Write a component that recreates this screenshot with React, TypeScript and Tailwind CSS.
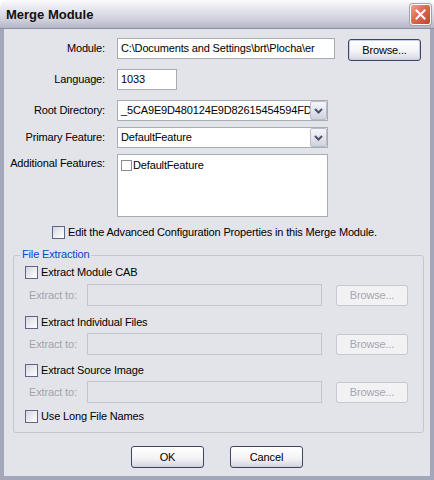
import React from "react";

const FONT = "font-['Liberation_Sans',Arial,sans-serif]";

function Checkbox() {
  return (
    <span className="inline-block w-[13px] h-[13px] shrink-0 border border-[#5d6685] bg-[linear-gradient(135deg,#d4d5de_0%,#eeeef2_55%,#ffffff_100%)]" />
  );
}

function ComboArrow() {
  return (
    <span className="flex items-center justify-center w-[17px] h-[19px] shrink-0 rounded-[2px] border border-[#b9bccb] bg-[linear-gradient(to_bottom,#f6f6f9_0%,#e4e5ec_50%,#cfd1dc_100%)]">
      <svg width="9" height="6" viewBox="0 0 9 6">
        <path d="M1 1 L4.5 4.5 L8 1" fill="none" stroke="#4a5270" strokeWidth="2" />
      </svg>
    </span>
  );
}

function Button({ children, w, disabled, focus }: { children: React.ReactNode; w: string; disabled?: boolean; focus?: boolean }) {
  if (disabled) {
    return (
      <div className={`${w} h-[21px] flex items-center justify-center rounded-[3px] border border-[#c7c8d2] bg-[#f2f2f4] text-[#a6a6ae]`}>
        {children}
      </div>
    );
  }
  return (
    <div
      className={`${w} h-[22px] flex items-center justify-center rounded-[3px] border border-[#3f4561] bg-[linear-gradient(to_bottom,#ffffff_0%,#f4f4f7_55%,#dcdde5_90%,#c9cad6_100%)] text-black ${
        focus ? "shadow-[inset_0_0_0_1px_#c6d0e6]" : ""
      }`}
    >
      {children}
    </div>
  );
}

function ExtractRow() {
  return (
    <div className="flex items-center h-[22px] pl-[4px]">
      <span className="w-[58px] text-[#a3a3aa]">Extract to:</span>
      <div className="w-[235px] h-[22px] border border-[#c3c5cf]" />
      <div className="ml-[14px]">
        <Button w="w-[72px]" disabled>
          Browse...
        </Button>
      </div>
    </div>
  );
}

export default function App() {
  return (
    <div className={`w-[434px] h-[480px] bg-white flex flex-col ${FONT} text-[11px] leading-[13px] text-black tracking-[-0.15px]`}>
      {/* Title bar */}
      <div className="h-[29px] shrink-0 rounded-t-[7px] border-b border-[#8d8fa6] bg-[linear-gradient(to_bottom,#fbfbfd_0%,#f0f0f5_15%,#dfdfe8_45%,#cccdda_75%,#b3b5c7_100%)] flex items-center justify-between pl-[6px] pr-[3px]">
        <span className="text-[13px] font-bold tracking-[0px] text-[#111] mt-[1px]">Merge Module</span>
        <div className="w-[21px] h-[21px] rounded-[3px] border border-white bg-[linear-gradient(135deg,#f0a08c_0%,#dc6a52_45%,#c2432c_100%)] flex items-center justify-center shadow-[0_0_0_1px_#b59a9a]">
          <svg width="11" height="11" viewBox="0 0 11 11">
            <path d="M1.5 1.5 L9.5 9.5 M9.5 1.5 L1.5 9.5" stroke="white" strokeWidth="2" strokeLinecap="square" />
          </svg>
        </div>
      </div>

      {/* Body */}
      <div className="flex-1 bg-[#e3e3ea] border-x-[4px] border-b-[4px] border-[#a4a6b9] flex flex-col pt-[9px]">
        {/* Module */}
        <div className="flex items-start">
          <span className="w-[101px] h-[21px] flex items-center justify-end">Module:</span>
          <div className="ml-[12px] w-[218px] h-[21px] border border-[#a5acb5] bg-white pl-[3px] flex items-center overflow-hidden whitespace-nowrap">
            {"C:\\Documents and Settings\\brt\\Plocha\\er"}
          </div>
          <div className="ml-[13px] mt-[1px]">
            <Button w="w-[73px]" focus>
              Browse...
            </Button>
          </div>
        </div>

        {/* Language */}
        <div className="flex items-center mt-[8px]">
          <span className="w-[101px] h-[21px] flex items-center justify-end">Language:</span>
          <div className="ml-[12px] w-[60px] h-[21px] border border-[#a5acb5] bg-white pl-[3px] flex items-center">1033</div>
        </div>

        {/* Root Directory */}
        <div className="flex items-center mt-[10px]">
          <span className="w-[101px] h-[21px] flex items-center justify-end">Root Directory:</span>
          <div className="ml-[12px] w-[211px] h-[21px] border border-[#a5acb5] bg-white flex items-center">
            <div className="flex-1 pl-[3px] overflow-hidden whitespace-nowrap">_5CA9E9D480124E9D82615454594FD</div>
            <ComboArrow />
          </div>
        </div>

        {/* Primary Feature */}
        <div className="flex items-center mt-[6px]">
          <span className="w-[101px] h-[21px] flex items-center justify-end">Primary Feature:</span>
          <div className="ml-[12px] w-[211px] h-[21px] border border-[#a5acb5] bg-white flex items-center">
            <div className="flex-1 pl-[3px] overflow-hidden whitespace-nowrap">DefaultFeature</div>
            <ComboArrow />
          </div>
        </div>

        {/* Additional Features */}
        <div className="flex items-start mt-[6px]">
          <span className="w-[101px] pt-[3px] text-right">Additional Features:</span>
          <div className="ml-[12px] w-[211px] h-[63px] border border-[#a5acb5] bg-white pt-[4px] pl-[3px]">
            <div className="flex items-center gap-[1px]">
              <span className="inline-block w-[11px] h-[11px] border border-[#8c8c92] bg-white" />
              <span>DefaultFeature</span>
            </div>
          </div>
        </div>

        {/* Advanced checkbox */}
        <div className="flex items-center gap-[3px] pl-[48px] mt-[9px] h-[13px]">
          <Checkbox />
          <span>Edit the Advanced Configuration Properties in this Merge Module.</span>
        </div>

        {/* File Extraction group */}
        <fieldset className="ml-[9px] mt-[10px] w-[411px] border border-[#c4c6d2] rounded-[3px] pb-[9px]">
          <legend className="ml-[6px] px-[2px] text-[#0a46c8] leading-[13px] relative -top-[1px]">File Extraction</legend>
          <div className="pl-[11px] flex flex-col">
            <div className="flex items-center gap-[3px] h-[13px] mt-[4px]">
              <Checkbox />
              <span>Extract Module CAB</span>
            </div>
            <div className="mt-[5px]">
              <ExtractRow />
            </div>
            <div className="flex items-center gap-[3px] h-[13px] mt-[10px]">
              <Checkbox />
              <span>Extract Individual Files</span>
            </div>
            <div className="mt-[4px]">
              <ExtractRow />
            </div>
            <div className="flex items-center gap-[3px] h-[13px] mt-[9px]">
              <Checkbox />
              <span>Extract Source Image</span>
            </div>
            <div className="mt-[4px]">
              <ExtractRow />
            </div>
            <div className="flex items-center gap-[3px] h-[13px] mt-[7px]">
              <Checkbox />
              <span>Use Long File Names</span>
            </div>
          </div>
        </fieldset>

        {/* OK / Cancel */}
        <div className="flex justify-center gap-[26px] mt-[13px]">
          <Button w="w-[73px]">OK</Button>
          <Button w="w-[73px]">Cancel</Button>
        </div>
      </div>
    </div>
  );
}
